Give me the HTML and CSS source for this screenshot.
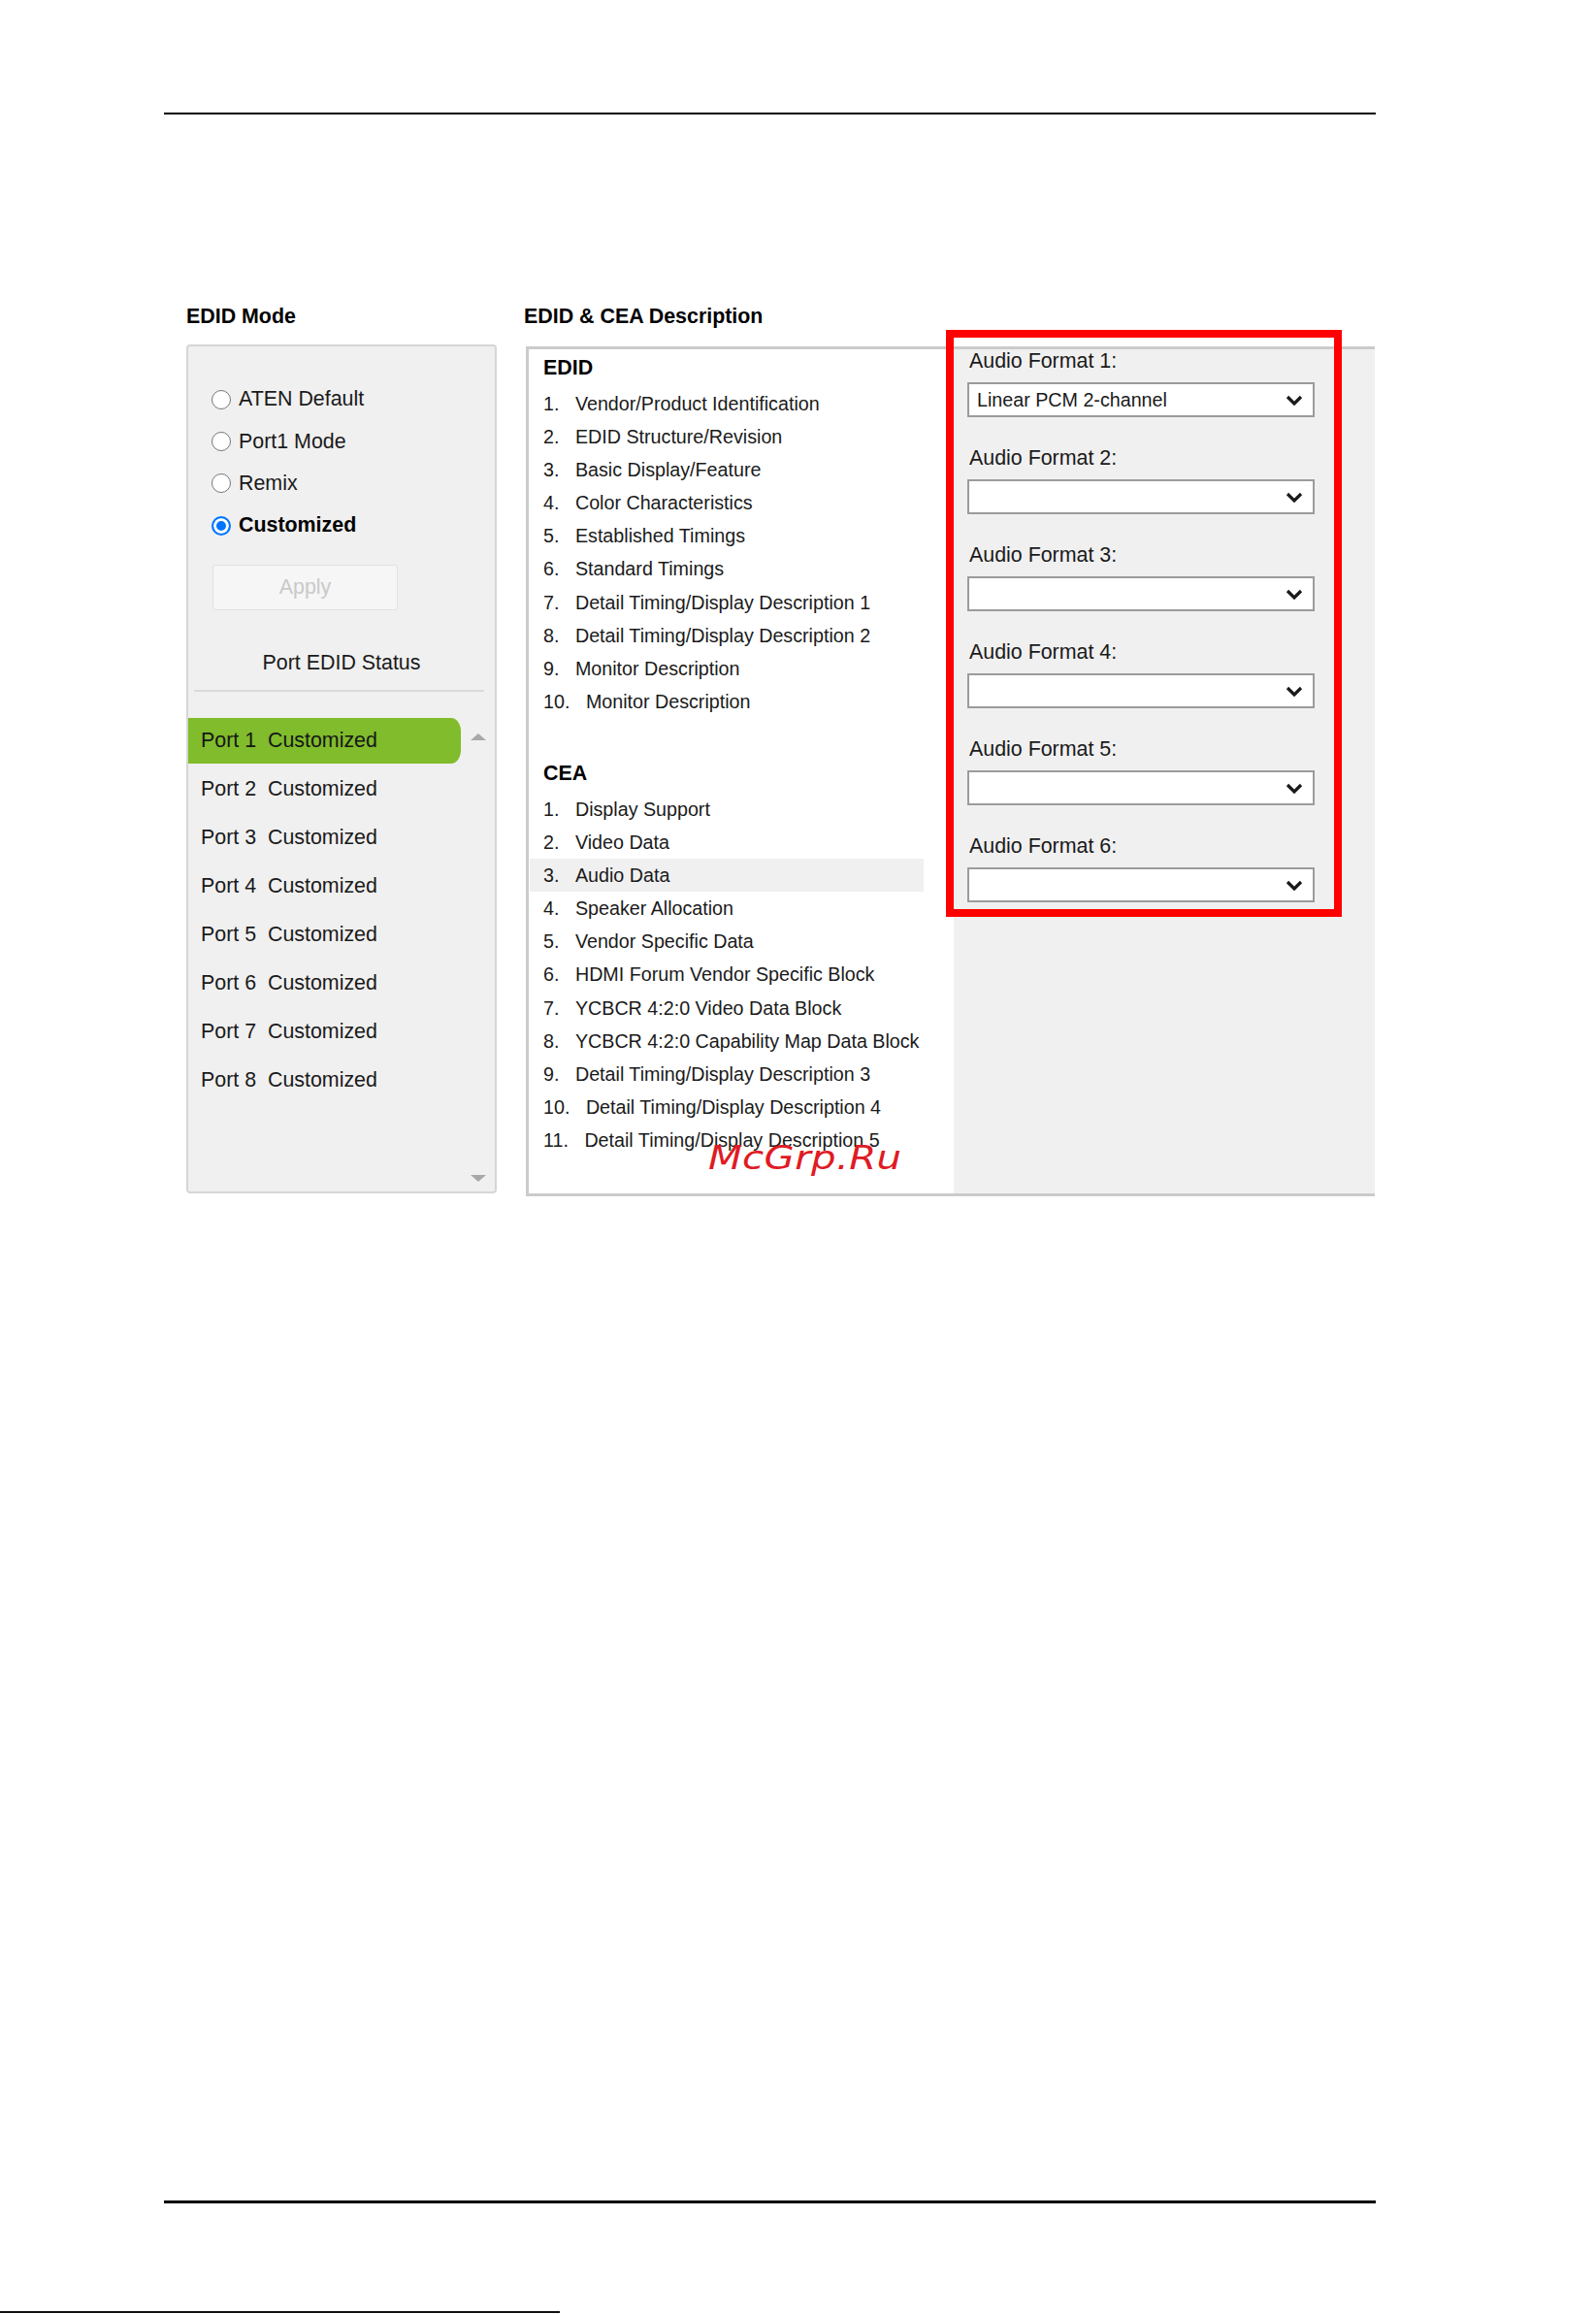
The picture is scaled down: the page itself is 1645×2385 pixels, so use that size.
FILE: index.html
```html
<!DOCTYPE html>
<html>
<head>
    <title>EDID Settings</title>
    <link rel="stylesheet" href="styles.css">
</head>
<body>
    <div class="page">
        <div class="rule top-rule"></div>

        <div class="edid-layout">
            <!-- left: mode + port status -->
            <div class="mode-col">
                <h2 class="col-title">EDID Mode</h2>
                <div class="mode-panel">
                    <div class="radio-group">
                        <div class="radio-row"><span class="radio"></span>ATEN Default</div>
                        <div class="radio-row"><span class="radio"></span>Port1 Mode</div>
                        <div class="radio-row"><span class="radio"></span>Remix</div>
                        <div class="radio-row selected"><span class="radio checked"></span>Customized</div>
                    </div>
                    <button class="apply-btn" disabled>Apply</button>
                    <div class="status-title">Port EDID Status</div>
                    <div class="status-sep"></div>
                    <div class="port-area">
                        <ul class="port-list">
                            <li class="active">Port 1  Customized</li>
                            <li>Port 2  Customized</li>
                            <li>Port 3  Customized</li>
                            <li>Port 4  Customized</li>
                            <li>Port 5  Customized</li>
                            <li>Port 6  Customized</li>
                            <li>Port 7  Customized</li>
                            <li>Port 8  Customized</li>
                        </ul>
                        <div class="scroll-bar">
                            <span class="arrow-up"></span>
                            <span class="arrow-down"></span>
                        </div>
                    </div>
                </div>
            </div>

            <!-- right: description list + audio formats -->
            <div class="desc-col">
                <h2 class="col-title">EDID &amp; CEA Description</h2>
                <div class="desc-panel">
                    <div class="desc-list">
                        <h3>EDID</h3>
                        <ol>
                            <li><span class="num">1.</span>Vendor/Product Identification</li>
                            <li><span class="num">2.</span>EDID Structure/Revision</li>
                            <li><span class="num">3.</span>Basic Display/Feature</li>
                            <li><span class="num">4.</span>Color Characteristics</li>
                            <li><span class="num">5.</span>Established Timings</li>
                            <li><span class="num">6.</span>Standard Timings</li>
                            <li><span class="num">7.</span>Detail Timing/Display Description 1</li>
                            <li><span class="num">8.</span>Detail Timing/Display Description 2</li>
                            <li><span class="num">9.</span>Monitor Description</li>
                            <li><span class="num">10.</span>Monitor Description</li>
                        </ol>

                        <h3 class="cea-title">CEA</h3>
                        <ol>
                            <li><span class="num">1.</span>Display Support</li>
                            <li><span class="num">2.</span>Video Data</li>
                            <li class="current"><span class="num">3.</span>Audio Data</li>
                            <li><span class="num">4.</span>Speaker Allocation</li>
                            <li><span class="num">5.</span>Vendor Specific Data</li>
                            <li><span class="num">6.</span>HDMI Forum Vendor Specific Block</li>
                            <li><span class="num">7.</span>YCBCR 4:2:0 Video Data Block</li>
                            <li><span class="num">8.</span>YCBCR 4:2:0 Capability Map Data Block</li>
                            <li><span class="num">9.</span>Detail Timing/Display Description 3</li>
                            <li><span class="num">10.</span>Detail Timing/Display Description 4</li>
                            <li><span class="num">11.</span>Detail Timing/Display Description 5</li>
                        </ol>
                    </div>

                    <div class="audio-col">
                        <div class="audio-field">
                            <div class="audio-label">Audio Format 1:</div>
                            <div class="audio-select">
                                <span>Linear PCM 2-channel</span>
                                <svg class="chevron" width="18" height="11" viewBox="0 0 18 11"><polyline points="2,2 9,9 16,2" /></svg>
                            </div>
                        </div>
                        <div class="audio-field">
                            <div class="audio-label">Audio Format 2:</div>
                            <div class="audio-select">
                                <span></span>
                                <svg class="chevron" width="18" height="11" viewBox="0 0 18 11"><polyline points="2,2 9,9 16,2" /></svg>
                            </div>
                        </div>
                        <div class="audio-field">
                            <div class="audio-label">Audio Format 3:</div>
                            <div class="audio-select">
                                <span></span>
                                <svg class="chevron" width="18" height="11" viewBox="0 0 18 11"><polyline points="2,2 9,9 16,2" /></svg>
                            </div>
                        </div>
                        <div class="audio-field">
                            <div class="audio-label">Audio Format 4:</div>
                            <div class="audio-select">
                                <span></span>
                                <svg class="chevron" width="18" height="11" viewBox="0 0 18 11"><polyline points="2,2 9,9 16,2" /></svg>
                            </div>
                        </div>
                        <div class="audio-field">
                            <div class="audio-label">Audio Format 5:</div>
                            <div class="audio-select">
                                <span></span>
                                <svg class="chevron" width="18" height="11" viewBox="0 0 18 11"><polyline points="2,2 9,9 16,2" /></svg>
                            </div>
                        </div>
                        <div class="audio-field">
                            <div class="audio-label">Audio Format 6:</div>
                            <div class="audio-select">
                                <span></span>
                                <svg class="chevron" width="18" height="11" viewBox="0 0 18 11"><polyline points="2,2 9,9 16,2" /></svg>
                            </div>
                        </div>
                    </div>
                </div>
            </div>
        </div>

        <!-- annotation overlays -->
        <div class="mark-box"></div>
        <div class="watermark">McGrp.Ru</div>

        <div class="rule bottom-rule"></div>
        <div class="scan-line"></div>
    </div>
</body>
</html>
```

FILE: styles.css
```css
body {
    margin: 0;
    background: #fff;
    font-family: "Liberation Sans", Arial, sans-serif;
    color: #1a1a1a;
}

.page {
    position: relative;
    width: 1645px;
    padding-top: 116px;
}

.rule {
    background: #000;
}

.top-rule {
    margin-left: 169px;
    width: 1249px;
    height: 2px;
}

.bottom-rule {
    margin-top: 1035px;
    margin-left: 169px;
    width: 1249px;
    height: 3px;
}

.scan-line {
    margin-top: 111px;
    width: 577px;
    height: 2px;
    background: #111;
}

.edid-layout {
    display: flex;
    gap: 28px;
    margin-top: 195px;
    margin-left: 192px;
}

.col-title {
    margin: 0;
    font-size: 21.4px;
    line-height: 26px;
    font-weight: bold;
    color: #000;
}

/* left column */
.mode-col {
    width: 320px;
}

.mode-panel {
    margin-top: 16px;
    height: 875px;
    box-sizing: border-box;
    border: 2px solid #d6d6d6;
    border-radius: 4px;
    background: #f0f0f0;
    display: flex;
    flex-direction: column;
}

.radio-group {
    padding-top: 33px;
    padding-left: 24px;
}

.radio-row {
    display: flex;
    align-items: center;
    gap: 8px;
    height: 43.4px;
    font-size: 21.4px;
}

.radio-row.selected {
    font-weight: bold;
    color: #000;
}

.radio {
    width: 20px;
    height: 20px;
    box-sizing: border-box;
    border-radius: 50%;
    border: 1.5px solid #767676;
    background: #fff;
}

.radio.checked {
    border: 2px solid #0075ff;
    background: #0075ff;
    box-shadow: inset 0 0 0 3px #fff;
}

.apply-btn {
    margin: 18px 0 0 25px;
    width: 191px;
    height: 47px;
    border: 1.5px solid #e2e2e2;
    border-radius: 3px;
    background: #f6f6f6;
    color: #c9c9c9;
    font-family: "Liberation Sans", Arial, sans-serif;
    font-size: 21.4px;
}

.status-title {
    margin-top: 41px;
    text-align: center;
    font-size: 21.4px;
    line-height: 26px;
}

.status-sep {
    margin: 15px 11px 0 6px;
    height: 2px;
    background: #dadada;
}

.port-area {
    flex: 1;
    display: flex;
    margin-top: 27px;
}

.port-list {
    list-style: none;
    margin: 0;
    padding: 0;
    width: 281px;
}

.port-list li {
    height: 47px;
    line-height: 47px;
    margin-bottom: 3px;
    padding-left: 13px;
    font-size: 21.4px;
    white-space: pre;
}

.port-list li.active {
    background: #80bc2b;
    border-radius: 0 10px 10px 0 / 0 14px 14px 0;
    color: #161616;
}

.scroll-bar {
    flex: 1;
    display: flex;
    flex-direction: column;
    align-items: center;
    justify-content: space-between;
    padding: 16px 0 10px;
}

.arrow-up,
.arrow-down {
    width: 0;
    height: 0;
    border-left: 8px solid transparent;
    border-right: 8px solid transparent;
}

.arrow-up {
    border-bottom: 7px solid #a8a8a8;
}

.arrow-down {
    border-top: 7px solid #a8a8a8;
}

/* right column */
.desc-col {
    width: 877px;
}

.desc-panel {
    margin: 18px 0 0 2px;
    height: 876px;
    box-sizing: border-box;
    border: 3px solid #cbcbcb;
    border-right: none;
    background: #fff;
    display: flex;
}

.desc-list {
    width: 438px;
    padding-top: 6px;
}

.desc-list h3 {
    margin: 0;
    padding-left: 15px;
    font-size: 21.4px;
    line-height: 26px;
    color: #000;
}

.desc-list h3.cea-title {
    margin-top: 44px;
}

.desc-list ol {
    list-style: none;
    margin: 7px 0 0 1px;
    padding: 0;
    width: 406px;
}

.desc-list li {
    height: 34.1px;
    line-height: 34.1px;
    padding-left: 14px;
    font-size: 19.7px;
    white-space: nowrap;
}

.desc-list li.current {
    background: #f0f0f0;
}

.num {
    margin-right: 16.5px;
}

.audio-col {
    flex: 1;
    background: #f0f0f0;
    padding-left: 14px;
}

.audio-field {
    margin-bottom: 30px;
}

.audio-label {
    padding-left: 2px;
    font-size: 21.4px;
    line-height: 24px;
}

.audio-select {
    margin-top: 10px;
    width: 358px;
    height: 36px;
    box-sizing: border-box;
    border: 2px solid #9b9b9b;
    background: #fff;
    display: flex;
    align-items: center;
    justify-content: space-between;
    padding: 0 10px 0 8px;
    font-size: 19.7px;
}

.chevron polyline {
    fill: none;
    stroke: #1a1a1a;
    stroke-width: 3.2;
}

/* overlays */
.mark-box {
    position: absolute;
    left: 975px;
    top: 340px;
    width: 408px;
    height: 605px;
    box-sizing: border-box;
    border: 8px solid #ff0000;
}

.watermark {
    position: absolute;
    left: 730px;
    top: 1174px;
    font-family: "DejaVu Sans", sans-serif;
    font-style: oblique;
    font-size: 33px;
    line-height: 40px;
    letter-spacing: 0.3px;
    color: #e01b24;
    transform: scaleX(1.22);
    transform-origin: left center;
}
```
